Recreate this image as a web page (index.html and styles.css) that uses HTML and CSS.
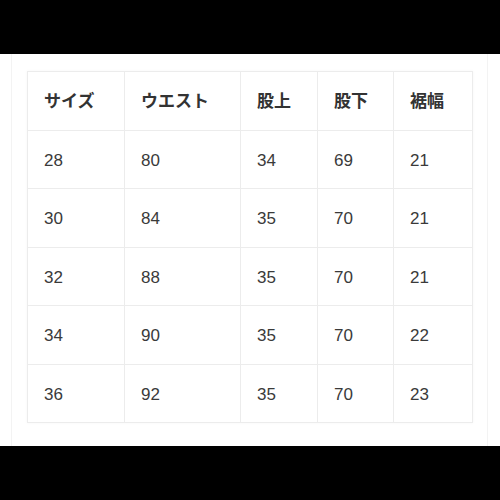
FILE: index.html
```html
<!DOCTYPE html>
<html lang="ja">
<head>
<meta charset="utf-8">
<link rel="stylesheet" href="styles.css">
</head>
<body>
<div class="band"></div>
<main class="panel">
  <table class="size-table">
    <colgroup>
      <col class="c1"><col class="c2"><col class="c3"><col class="c4"><col class="c5">
    </colgroup>
    <thead>
      <tr><th>サイズ</th><th>ウエスト</th><th>股上</th><th>股下</th><th>裾幅</th></tr>
    </thead>
    <tbody>
      <tr><td>28</td><td>80</td><td>34</td><td>69</td><td>21</td></tr>
      <tr><td>30</td><td>84</td><td>35</td><td>70</td><td>21</td></tr>
      <tr><td>32</td><td>88</td><td>35</td><td>70</td><td>21</td></tr>
      <tr><td>34</td><td>90</td><td>35</td><td>70</td><td>22</td></tr>
      <tr><td>36</td><td>92</td><td>35</td><td>70</td><td>23</td></tr>
    </tbody>
  </table>
</main>
<div class="band"></div>
</body>
</html>
```
FILE: styles.css
```css
html, body {
  margin: 0;
  padding: 0;
  background: #000;
}
body {
  width: 500px;
  height: 500px;
  display: flex;
  flex-direction: column;
  font-family: "Liberation Sans", "Noto Sans CJK JP", sans-serif;
  color: #333;
}
.band {
  height: 54px;
  background: #000;
  flex: none;
}
.panel {
  height: 392px;
  background: #fff;
  box-sizing: border-box;
  padding: 17px 0 0 0;
  display: flex;
  align-items: flex-start;
  justify-content: flex-start;
  position: relative;
}
.panel::before, .panel::after {
  content: "";
  position: absolute;
  top: 0;
  bottom: 0;
  width: 1px;
  background: #f3f3f3;
}
.panel::before { left: 11px; }
.panel::after { left: 487px; }
.size-table {
  margin-left: 27px;
  border-collapse: collapse;
  table-layout: fixed;
  width: 445px;
  font-size: 17px;
  box-shadow: 0 0 3px rgba(0,0,0,0.04);
}
.c1 { width: 97px; }
.c2 { width: 116px; }
.c3 { width: 77px; }
.c4 { width: 76px; }
.c5 { width: 79px; }
.size-table th, .size-table td {
  border: 1px solid #ececec;
  text-align: left;
  padding: 0 0 0 16px;
  height: 54.5px;
  vertical-align: middle;
}
.size-table th {
  font-weight: bold;
  color: #333;
  padding-bottom: 3px;
}
.size-table td {
  font-weight: normal;
  color: #3a3a3a;
  padding-top: 3px;
}
```
